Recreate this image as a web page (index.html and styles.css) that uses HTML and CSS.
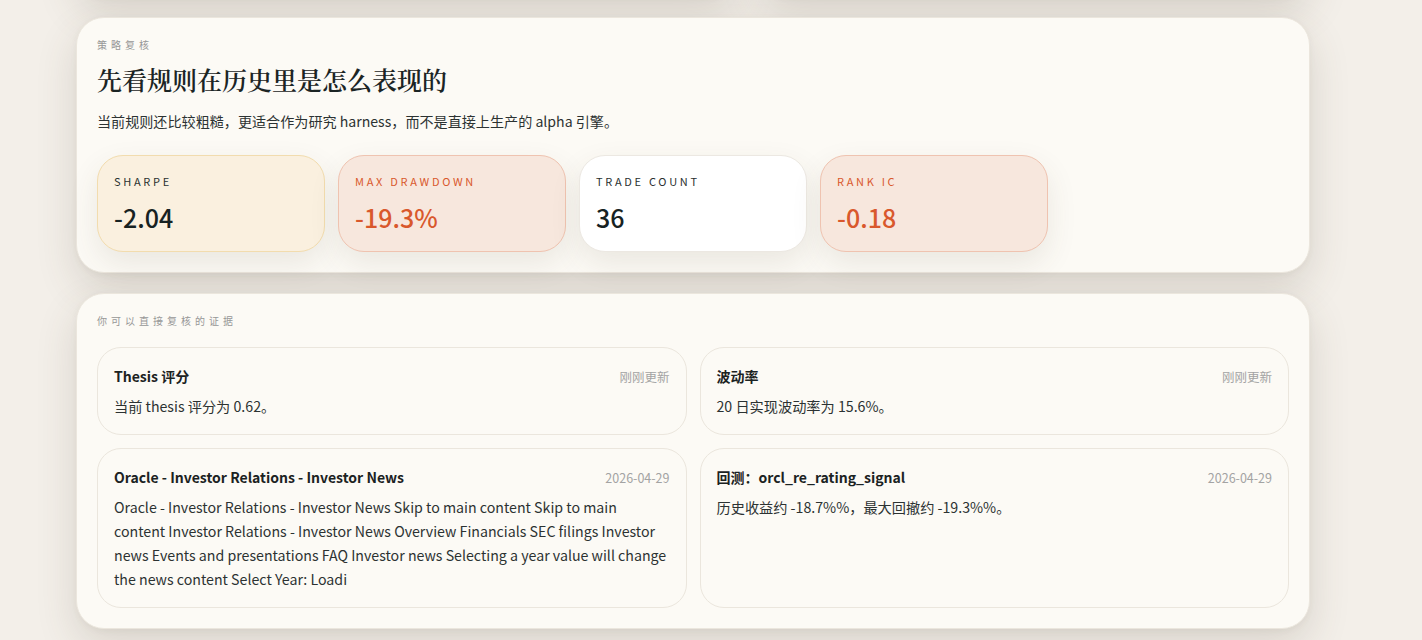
FILE: index.html
```html
<!DOCTYPE html>
<html lang="zh-CN">
<head>
<meta charset="utf-8">
<title>策略复核</title>
<link rel="stylesheet" href="styles.css">
</head>
<body>
<main class="page">
  <div class="prev-row">
    <section class="card prev"></section>
    <section class="card prev"></section>
  </div>

  <section class="card">
    <div class="eyebrow">策略复核</div>
    <h1 class="title">先看规则在历史里是怎么表现的</h1>
    <p class="lead">当前规则还比较粗糙，更适合作为研究 harness，而不是直接上生产的 alpha 引擎。</p>
    <div class="metrics">
      <div class="metric warn">
        <div class="m-label">Sharpe</div>
        <div class="m-value">-2.04</div>
      </div>
      <div class="metric bad">
        <div class="m-label">Max Drawdown</div>
        <div class="m-value">-19.3%</div>
      </div>
      <div class="metric plain">
        <div class="m-label">Trade Count</div>
        <div class="m-value">36</div>
      </div>
      <div class="metric bad">
        <div class="m-label">Rank IC</div>
        <div class="m-value">-0.18</div>
      </div>
    </div>
  </section>

  <section class="card">
    <div class="eyebrow">你可以直接复核的证据</div>
    <div class="evidence">
      <article class="ev">
        <div class="ev-head"><span class="ev-title">Thesis 评分</span><span class="ev-meta">刚刚更新</span></div>
        <p class="ev-body">当前 thesis 评分为 0.62。</p>
      </article>
      <article class="ev">
        <div class="ev-head"><span class="ev-title">波动率</span><span class="ev-meta">刚刚更新</span></div>
        <p class="ev-body">20 日实现波动率为 15.6%。</p>
      </article>
      <article class="ev">
        <div class="ev-head"><span class="ev-title">Oracle - Investor Relations - Investor News</span><span class="ev-meta">2026-04-29</span></div>
        <p class="ev-body">Oracle - Investor Relations - Investor News Skip to main content Skip to main content Investor Relations - Investor News Overview Financials SEC filings Investor news Events and presentations FAQ Investor news Selecting a year value will change the news content Select Year: Loadi</p>
      </article>
      <article class="ev">
        <div class="ev-head"><span class="ev-title">回测：orcl_re_rating_signal</span><span class="ev-meta">2026-04-29</span></div>
        <p class="ev-body">历史收益约 -18.7%%，最大回撤约 -19.3%%。</p>
      </article>
    </div>
  </section>
</main>
</body>
</html>
```
FILE: styles.css
```css
* { box-sizing: border-box; }
html, body {
  margin: 0;
  padding: 0;
  height: 100%;
  overflow: hidden;
}
body {
  background: #f3efe9;
  font-family: "Noto Sans CJK SC", "Source Sans Pro", sans-serif;
  color: #1f2a2a;
}
.page {
  width: 1234px;
  margin-left: 76px;
  display: flex;
  flex-direction: column;
  gap: 20px;
}
.prev-row {
  display: grid;
  grid-template-columns: 1.2fr 1fr;
  gap: 21px;
  margin-top: -103px;
}
.card {
  background: #fcfaf5;
  border: 1px solid #ebe6dd;
  border-radius: 28px;
  padding: 20px 20px 20px 20px;
  box-shadow: 0 16px 40px rgba(80, 70, 50, 0.16), 0 2px 6px rgba(80, 70, 50, 0.05);
}
.card.prev {
  height: 100px;
}
.eyebrow {
  font-size: 10px;
  line-height: 14px;
  letter-spacing: 4px;
  color: #979797;
}
.title {
  margin: 9px 0 0;
  font-family: "Noto Serif CJK SC", "Source Han Serif SC", "Noto Serif", serif;
  font-size: 25px;
  line-height: 36px;
  font-weight: 600;
  color: #1b2424;
}
.lead {
  margin: 14px 0 0;
  font-size: 14.1px;
  line-height: 20px;
  color: #2c3232;
}
.metrics {
  margin-top: 24px;
  display: grid;
  grid-template-columns: repeat(5, 1fr);
  gap: 13px;
}
.metric {
  border: 1px solid #ece8e2;
  border-radius: 26px;
  padding: 18px 16px 18px 16px;
  background: #ffffff;
  box-shadow: 0 12px 30px rgba(80, 70, 50, 0.10);
}
.metric.warn {
  background: #faf0df;
  border-color: #f2dcae;
}
.metric.bad {
  background: #f7e7dd;
  border-color: #efc3b0;
}
.m-label {
  font-size: 11px;
  line-height: 14px;
  letter-spacing: 2.7px;
  text-transform: uppercase;
  color: #2a3030;
}
.m-value {
  margin-top: 13px;
  font-size: 25px;
  line-height: 32px;
  font-weight: 500;
  color: #172222;
}
.metric.bad .m-label,
.metric.bad .m-value {
  color: #d9582c;
}
.evidence {
  margin-top: 19px;
  display: grid;
  grid-template-columns: 1fr 1fr;
  gap: 13px;
}
.ev {
  border: 1px solid #ebe6dd;
  border-radius: 24px;
  padding: 18px 16px 16px 16px;
  background: #fcfaf5;
}
.ev-head {
  display: flex;
  justify-content: space-between;
  align-items: baseline;
  gap: 12px;
}
.ev-title {
  font-size: 14px;
  line-height: 20px;
  font-weight: 700;
  color: #1b2222;
}
.ev-meta {
  font-size: 12.5px;
  line-height: 20px;
  color: #a3a3a3;
  white-space: nowrap;
}
.ev-body {
  margin: 7px 0 0;
  font-size: 14.2px;
  line-height: 24px;
  color: #2c3232;
}
```
